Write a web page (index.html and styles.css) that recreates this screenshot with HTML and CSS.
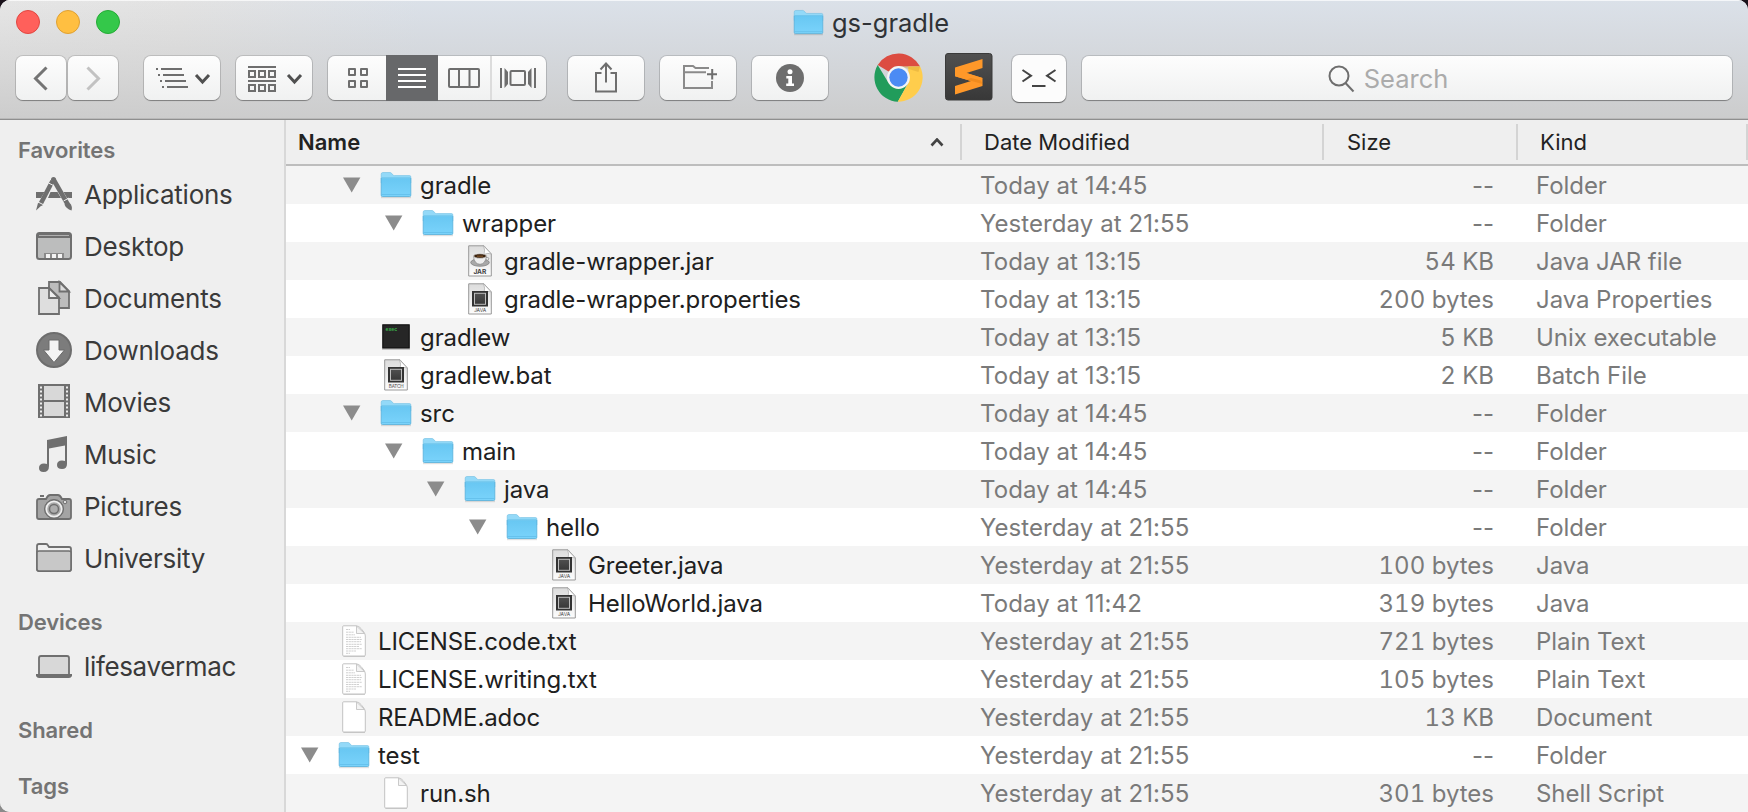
FILE: index.html
```html
<!DOCTYPE html>
<html lang="en">
<head>
<meta charset="utf-8">
<title>gs-gradle</title>
<link rel="stylesheet" href="styles.css">
</head>
<body>
<svg class="defs" aria-hidden="true">
  <defs>
    <linearGradient id="gFolder" x1="0" y1="0" x2="0" y2="1"><stop offset="0" stop-color="#68c7f2"/><stop offset="1" stop-color="#7ad3fb"/></linearGradient>
    <linearGradient id="gPaper" x1="0" y1="0" x2="0" y2="1"><stop offset="0" stop-color="#dcdcdc"/><stop offset="1" stop-color="#fdfdfd"/></linearGradient>
    <linearGradient id="gDark" x1="0" y1="0" x2="0" y2="1"><stop offset="0" stop-color="#505050"/><stop offset="1" stop-color="#383838"/></linearGradient>
  </defs>
  <symbol id="folder" viewBox="0 0 32 28">
    <path d="M1 26.2h30" stroke="#000" stroke-opacity=".12" stroke-width="2"/>
    <path d="M1.2 3.2Q1.2 1.5 2.8 1.5H10q1 0 1.600.8l1.400 1.700q.5.6 1.400.6H29.500q1.300 0 1.300 1.300V12H1.200Z" fill="#93d9f8" stroke="#6fbde2" stroke-width=".6"/>
    <path d="M1.200 7.200H30.800V24.200q0 1.300-1.300 1.300H2.500q-1.300 0-1.300-1.300Z" fill="url(#gFolder)"/>
    <path d="M1.200 7V24.200q0 1.300 1.300 1.300H29.500q1.300 0 1.300-1.300V7" fill="none" stroke="#56b0da" stroke-width=".8"/>
    <path d="M1.500 6.800H30.500M1.600 23.500H30.400" stroke="#5fbbe6" stroke-width=".7" fill="none"/>
  </symbol>
  <symbol id="java" viewBox="0 0 24 32">
    <path d="M.7.8H16L23.300 9V31H.7Z" fill="url(#gPaper)" stroke="#999"/>
    <path d="M15.500.8Q17.500 5 16 9.500Q20 7.500 23.300 9Z" fill="#fff" stroke="#aaa" stroke-width=".7"/>
    <rect x="4" y="8" width="16" height="15.500" fill="#333"/>
    <rect x="6.500" y="10.300" width="11" height="11" fill="url(#gDark)" stroke="#bdbdbd" stroke-width="1"/>
    <text x="12" y="28.700" font-size="5" text-anchor="middle" class="tag">JAVA</text>
  </symbol>
  <symbol id="batch" viewBox="0 0 24 32">
    <path d="M.7.8H16L23.300 9V31H.7Z" fill="url(#gPaper)" stroke="#999"/>
    <path d="M15.500.8Q17.500 5 16 9.500Q20 7.500 23.300 9Z" fill="#fff" stroke="#aaa" stroke-width=".7"/>
    <rect x="4" y="8" width="16" height="15.500" fill="#333"/>
    <rect x="6.500" y="10.300" width="11" height="11" fill="url(#gDark)" stroke="#bdbdbd" stroke-width="1"/>
    <text x="12.200" y="28.700" font-size="4.600" text-anchor="middle" class="tag">BATCH</text>
  </symbol>
  <symbol id="jar" viewBox="0 0 24 32">
    <path d="M.7.8H16L23.300 9V31H.7Z" fill="url(#gPaper)" stroke="#999"/>
    <path d="M15.500.8Q17.500 5 16 9.500Q20 7.500 23.300 9Z" fill="#fff" stroke="#aaa" stroke-width=".7"/>
    <ellipse cx="12" cy="17.500" rx="9.300" ry="3.800" fill="#a9a9a9" stroke="#6e6e6e" stroke-width=".6"/>
    <path d="M5.500 11Q6 19 12 19.300Q17.500 19 18.500 11Z" fill="#eee" stroke="#777" stroke-width=".6"/>
    <path d="M18 12.500Q21.500 12 20.500 14.500Q19.500 16.300 17 16" fill="none" stroke="#999" stroke-width="1"/>
    <ellipse cx="12" cy="11" rx="6.500" ry="2.300" fill="#3c2410" stroke="#ddd" stroke-width=".8"/>
    <path d="M9 11.200h6" stroke="#8b5a2b"/>
    <text x="11.800" y="29" font-size="6.600" text-anchor="middle" class="tag bold">JAR</text>
  </symbol>
  <symbol id="exec" viewBox="0 0 30 28">
    <rect x="1" y="1.500" width="28" height="25.500" fill="#9a9a9a" opacity=".5"/>
    <rect x="1.800" y="1.800" width="26.400" height="23.200" fill="#262626" stroke="#0c0c0c"/>
    <text x="4.500" y="8.200" font-size="5" class="exec-label">exec</text>
  </symbol>
  <symbol id="blank" viewBox="0 0 24 32">
    <path d="M1.500 31.400H23" stroke="#000" stroke-opacity=".18"/>
    <path d="M1.600.8H14Q17 1 19 3.500L21.800 7Q23.300 9 23.300 11V30Q23.300 31 22.300 31H1.700Q.7 31 .7 30V1.700Q.7.8 1.600.8Z" fill="#fff" stroke="#bcbcbc" stroke-width=".9"/>
    <path d="M14.500 1V8.500H22.500Z" fill="#f3f3f3" stroke="#c4c4c4" stroke-width=".9"/>
  </symbol>
  <symbol id="plain" viewBox="0 0 24 32">
    <use href="#blank"/>
    <path d="M4 4.500h4M4 7.200h8M4 9.800h9M4 12.300h15M4 14.500h16M4 16.700h15M4 19.300h16M4 21.500h13M4 23.700h16M4 26h10M4 28.300h4" stroke="#a9a9a9" stroke-width=".9" opacity=".6" stroke-dasharray="2.200 .5"/>
  </symbol>
  <symbol id="tri" viewBox="0 0 18 16"><path d="M0 .5H17.400L8.700 15.500Z" fill="#8c8c8c"/></symbol>
</svg>

<div class="window">
  <header class="chrome">
    <div class="titlebar">
      <div class="lights"><i class="red"></i><i class="yellow"></i><i class="green"></i></div>
      <h1 class="title"><svg class="title-icon"><use href="#folder"/></svg><span>gs-gradle</span></h1>
    </div>
    <div class="toolbar">
      <div class="btn nav"><svg viewBox="0 0 50 44"><path d="M30.500 11.500L19.500 22.500L30.500 33.500" stroke-width="3"/></svg></div>
      <div class="btn nav off"><svg viewBox="0 0 50 44"><path d="M19.500 11.500L30.500 22.500L19.500 33.500" stroke-width="3"/></svg></div>
      <div class="btn std arrange">
        <svg viewBox="0 0 76 44"><path d="M12 13h2M17 13H38M14 19h2M19 19H40M16 25h2M21 25H42M18 31h2M23 31H44"/><path class="dark" d="M52 19L58.500 26L65 19" stroke-width="3"/></svg>
      </div>
      <div class="btn std">
        <svg viewBox="0 0 76 44"><path d="M12 11H40M12 25H40"/><path d="M13 15h6v6h-6zM23 15h6v6h-6zM33 15h6v6h-6zM13 29h6v6h-6zM23 29h6v6h-6zM33 29h6v6h-6z"/><path class="dark" d="M52 19L58.500 26L65 19" stroke-width="3"/></svg>
      </div>
      <div class="btn views">
        <svg class="seg icons-seg" viewBox="0 0 58 44"><path d="M21 13h6v6h-6zM33 13h6v6h-6zM21 25h6v6h-6zM33 25h6v6h-6z" stroke-linejoin="round"/></svg>
        <svg class="seg active" viewBox="0 0 52 44"><path d="M12 13H40M12 19H40M12 25H40M12 31H40"/></svg>
        <svg class="seg columns-seg" viewBox="0 0 52 44"><rect x="11" y="13" width="30" height="18" rx="1"/><path d="M21 13V31M31.500 13V31"/></svg>
        <svg class="seg flow-seg" viewBox="0 0 54 44"><path d="M9 12V32M43 12V32"/><rect x="18.500" y="15" width="14.500" height="14" rx="1"/><path class="solid" d="M12.500 12L16 16V28L12.500 32ZM39.500 12L36 16V28L39.500 32Z"/></svg>
      </div>
      <div class="btn std share"><svg viewBox="0 0 76 44"><path d="M33.500 17H28V35.500H48V17H42.500M38 26.500V8M32.500 13.500L38 7.500L43.500 13.500"/></svg></div>
      <div class="btn std"><svg viewBox="0 0 76 44"><path class="light" d="M49 12H35.500L33 10H24V32H52V25M24.500 16.200H46"/><path d="M47 18.200H57M52.200 13V23.500"/></svg></div>
      <div class="btn std"><svg viewBox="0 0 76 44"><circle class="solid" cx="38" cy="22" r="14"/><circle class="white" cx="38" cy="15.700" r="2.500"/><path class="white" d="M34.300 20H40V27.500H42V30H34.200V27.500H36.300V22.400H34.300Z"/></svg></div>
      <svg class="app-chrome" viewBox="0 0 48 50">
        <path d="M24 25L3.600 12.800A24 24 0 0 1 45.200 14.200H24Z" fill="#dc4c41"/>
        <path d="M3.600 12.800A24 24 0 0 0 23.300 48.800L33.500 30.500L24 25L14 30Z" fill="#219c5b"/>
        <path d="M45.200 14.200A24 24 0 0 1 23.300 48.800L33.600 30.500V14.200Z" fill="#ffcd4c"/>
        <path d="M24 14.200H45.200L43.500 19.500L28 14.800Z" fill="#d9a638" opacity=".45"/>
        <circle cx="24" cy="25" r="11.200" fill="#f4f4f4"/>
        <circle cx="24" cy="25" r="9" fill="#4b8bf4"/>
      </svg>
      <svg class="app-sublime" viewBox="0 0 48 48">
        <rect x=".5" y=".5" width="46.500" height="46.500" rx="2.500" fill="url(#gDark)" stroke="#3a3a3a"/>
        <path d="M10 14.500L37.500 6V15L21.500 20L37.500 25V33L10 41.500V33L26 28L10 23.200Z" fill="#ff9829"/>
        <path d="M10 23.200L21.500 20L37.500 25L35 27Q32 28.500 26 28Z" fill="#ff9829"/>
        <path d="M21.500 26.600L37.500 31L36 27.500L26 25Z" fill="#e27d14" opacity=".5"/>
      </svg>
      <div class="app-term"><svg viewBox="0 0 54 48"><path d="M10.500 16L19 21.700L10.500 27.500M43.500 16L35 21.700L43.500 27.500M20 32H33.500"/></svg></div>
      <div class="btn search"><svg viewBox="0 0 28 30"><circle cx="11" cy="12" r="9.500"/><path d="M17.500 19L25.500 27.500"/></svg><span>Search</span></div>
    </div>
  </header>

  <div class="body">
    <nav class="sidebar">
      <h2>Favorites</h2>
      <a class="item"><svg viewBox="0 0 36 36"><path class="f" d="M0 16H8.500L5 22H0ZM27.500 16H36V22H31ZM14.500 16H21.500L25 22H12Z"/><path d="M16.500 5L4 29" stroke-width="4.600"/><path d="M17.500 3.500L31.500 28" stroke-width="4.600"/><circle class="f" cx="17.500" cy="3.500" r="2.500"/><path class="f" d="M2 27L6 29L0 34.500ZM28.500 28.500Q32 24 35 28.500Q36.500 32 35.500 34.500Q30 32.500 28.500 28.500Z"/><path d="M12.500 7L17.500 9.500M1 25.500L8 29M27.500 25L33 22" stroke="#efefef" stroke-width="1"/></svg><span>Applications</span></a>
      <a class="item"><svg viewBox="0 0 36 36"><rect x="1" y="5" width="34" height="26" rx="2.500" fill="#bcbdbd"/><path d="M2 6H34V8.500H2Z" fill="#f0f0f0"/><path d="M1 9.200H35" stroke-width="1.600"/><path class="f" d="M8 25H28V30H8Z" opacity=".65"/><path d="M10 26h4v4h-4zM16 26h4v4h-4zM22 26h4v4h-4z" fill="#f4f4f4" stroke="none"/></svg><span>Desktop</span></a>
      <a class="item"><svg viewBox="0 0 36 36"><path d="M13 2H24L33 11V28H13Z" fill="#bcbcbc" stroke-width="1.800"/><path d="M23.500 2V11.500H33Z" fill="#ddd" stroke-width="1.800"/><path d="M3 8H13L23 17.500V34H3Z" fill="#dedede" stroke-width="1.800"/><path d="M13 8V18H23Z" fill="#eee" stroke-width="1.800"/></svg><span>Documents</span></a>
      <a class="item"><svg viewBox="0 0 36 36"><circle cx="18" cy="18" r="17" fill="#7c7c7c" stroke="#6d6d6d" stroke-width="2"/><path d="M13 8H23V18H28.500L18 30.500L7.500 18H13Z" fill="#f4f4f4" stroke="#6a6a6a" stroke-width="1"/></svg><span>Downloads</span></a>
      <a class="item"><svg viewBox="0 0 36 36"><rect class="f" x="2" y="0" width="32" height="34"/><path d="M8 2H28V16H8ZM8 18H28V32H8Z" fill="#d8d8d8" stroke="none"/><path d="M5 2.500V33M31 2.500V33" stroke="#eee" stroke-dasharray="2 2"/></svg><span>Movies</span></a>
      <a class="item"><svg viewBox="0 0 36 36"><path class="f" d="M11 4L31 0V28Q31 33 26 33Q21 33 21 29Q21 24.500 26 24.500Q28 24.500 29 25V9.500L13 12.500V30Q13 36 7.500 36Q3 36 3 32Q3 27.500 8 27.500Q10 27.500 11 28Z"/></svg><span>Music</span></a>
      <a class="item"><svg viewBox="0 0 36 36"><path d="M3 11H10Q12 7 14 7H22Q24 7 26 11H33Q35 11 35 13V29Q35 31 33 31H3Q1 31 1 29V13Q1 11 3 11Z" fill="#a4a4a4" stroke-width="1.800"/><path d="M4 8H8"/><circle cx="18" cy="21" r="9.500" fill="#777" stroke="#6d6d6d" stroke-width="1"/><circle cx="18" cy="21" r="7.700" fill="#aaa" stroke="#efefef" stroke-width="1.800"/><circle cx="18" cy="21" r="4.500" fill="#adadad" stroke-width="1.500"/><circle cx="29" cy="14" r="1.800" fill="#ddd" stroke-width="1"/></svg><span>Pictures</span></a>
      <a class="item"><svg viewBox="0 0 36 36"><path d="M1 6Q1 4 3 4H10Q11.500 4 12 5.500L13 7H33Q35 7 35 9V29Q35 31 33 31H3Q1 31 1 29Z" fill="#efefef" stroke-width="1.800"/><path d="M1 12.500Q1 11 3 11H33Q35 11 35 12.500V29Q35 31 33 31H3Q1 31 1 29Z" fill="#c8c8c8" stroke-width="1.600"/></svg><span>University</span></a>
      <h2>Devices</h2>
      <a class="item"><svg viewBox="0 0 36 36"><path d="M3 27V10Q3 8 5 8H31Q33 8 33 10V27Z" fill="#d8d8d8" stroke-width="1.800"/><path class="f" d="M0 26H36V28Q35 30 33 30H3Q1 30 0 28Z"/></svg><span class="device">lifesavermac</span></a>
      <h2>Shared</h2>
      <h2>Tags</h2>
    </nav>

    <main class="list">
      <div class="head">
        <div class="hcell name-h"><span>Name</span><svg viewBox="0 0 14 9"><path d="M1.500 7.500L7 1.500L12.500 7.500"/></svg></div>
        <div class="hcell"><span>Date Modified</span></div>
        <div class="hcell size-h"><span>Size</span></div>
        <div class="hcell"><span>Kind</span></div>
      </div>
      <div class="row"><div class="name l1"><svg class="tri"><use href="#tri"/></svg><svg class="ico folder"><use href="#folder"/></svg><span>gradle</span></div><div class="date">Today at 14:45</div><div class="size none">--</div><div class="kind">Folder</div></div>
      <div class="row"><div class="name l2"><svg class="tri"><use href="#tri"/></svg><svg class="ico folder"><use href="#folder"/></svg><span>wrapper</span></div><div class="date">Yesterday at 21:55</div><div class="size none">--</div><div class="kind">Folder</div></div>
      <div class="row"><div class="name l3"><i class="tri"></i><svg class="ico file"><use href="#jar"/></svg><span>gradle-wrapper.jar</span></div><div class="date">Today at 13:15</div><div class="size">54 KB</div><div class="kind">Java JAR file</div></div>
      <div class="row"><div class="name l3"><i class="tri"></i><svg class="ico file"><use href="#java"/></svg><span>gradle-wrapper.properties</span></div><div class="date">Today at 13:15</div><div class="size">200 bytes</div><div class="kind">Java Properties</div></div>
      <div class="row"><div class="name l1"><i class="tri"></i><svg class="ico exec"><use href="#exec"/></svg><span>gradlew</span></div><div class="date">Today at 13:15</div><div class="size">5 KB</div><div class="kind">Unix executable</div></div>
      <div class="row"><div class="name l1"><i class="tri"></i><svg class="ico file"><use href="#batch"/></svg><span>gradlew.bat</span></div><div class="date">Today at 13:15</div><div class="size">2 KB</div><div class="kind">Batch File</div></div>
      <div class="row"><div class="name l1"><svg class="tri"><use href="#tri"/></svg><svg class="ico folder"><use href="#folder"/></svg><span>src</span></div><div class="date">Today at 14:45</div><div class="size none">--</div><div class="kind">Folder</div></div>
      <div class="row"><div class="name l2"><svg class="tri"><use href="#tri"/></svg><svg class="ico folder"><use href="#folder"/></svg><span>main</span></div><div class="date">Today at 14:45</div><div class="size none">--</div><div class="kind">Folder</div></div>
      <div class="row"><div class="name l3"><svg class="tri"><use href="#tri"/></svg><svg class="ico folder"><use href="#folder"/></svg><span>java</span></div><div class="date">Today at 14:45</div><div class="size none">--</div><div class="kind">Folder</div></div>
      <div class="row"><div class="name l4"><svg class="tri"><use href="#tri"/></svg><svg class="ico folder"><use href="#folder"/></svg><span>hello</span></div><div class="date">Yesterday at 21:55</div><div class="size none">--</div><div class="kind">Folder</div></div>
      <div class="row"><div class="name l5"><i class="tri"></i><svg class="ico file"><use href="#java"/></svg><span>Greeter.java</span></div><div class="date">Yesterday at 21:55</div><div class="size">100 bytes</div><div class="kind">Java</div></div>
      <div class="row"><div class="name l5"><i class="tri"></i><svg class="ico file"><use href="#java"/></svg><span>HelloWorld.java</span></div><div class="date">Today at 11:42</div><div class="size">319 bytes</div><div class="kind">Java</div></div>
      <div class="row"><div class="name l0"><i class="tri"></i><svg class="ico file"><use href="#plain"/></svg><span>LICENSE.code.txt</span></div><div class="date">Yesterday at 21:55</div><div class="size">721 bytes</div><div class="kind">Plain Text</div></div>
      <div class="row"><div class="name l0"><i class="tri"></i><svg class="ico file"><use href="#plain"/></svg><span>LICENSE.writing.txt</span></div><div class="date">Yesterday at 21:55</div><div class="size">105 bytes</div><div class="kind">Plain Text</div></div>
      <div class="row"><div class="name l0"><i class="tri"></i><svg class="ico file"><use href="#blank"/></svg><span>README.adoc</span></div><div class="date">Yesterday at 21:55</div><div class="size">13 KB</div><div class="kind">Document</div></div>
      <div class="row"><div class="name l0"><svg class="tri"><use href="#tri"/></svg><svg class="ico folder"><use href="#folder"/></svg><span>test</span></div><div class="date">Yesterday at 21:55</div><div class="size none">--</div><div class="kind">Folder</div></div>
      <div class="row"><div class="name l1"><i class="tri"></i><svg class="ico file"><use href="#blank"/></svg><span>run.sh</span></div><div class="date">Yesterday at 21:55</div><div class="size">301 bytes</div><div class="kind">Shell Script</div></div>
    </main>
  </div>
</div>
</body>
</html>
```

FILE: styles.css
```css
* { box-sizing: border-box; }
html, body { margin: 0; height: 100%; overflow: hidden; }
body {
  background: linear-gradient(#1a121b 0 50%, #8a8a8a 50%);
  font-family: Inter, "Liberation Sans", sans-serif;
  font-size: 24px;
  color: #242424;
}
.defs { position: absolute; width: 0; height: 0; overflow: visible; }
svg { display: block; flex: none; }

.window {
  width: 1748px;
  height: 812px;
  border-radius: 10px 10px 0 10px;
  overflow: hidden;
  display: flex;
  flex-direction: column;
  background: #efefef;
}

/* Title bar and toolbar */
.chrome {
  height: 120px;
  flex: none;
  background:
    linear-gradient(to bottom, rgba(203,203,203,0), rgba(203,203,203,.55) 60%, rgba(203,203,203,.95)),
    linear-gradient(to right, #e6e6e6 0, #e3e3e3 180px, #dbe1e9 420px, #dbe1e9 100%);
  border-bottom: 1px solid #8f8f8f;
  box-shadow: inset 0 1px 0 rgba(255,255,255,.7), inset 0 -1px 0 #b9b9b9;
}
.titlebar { height: 44px; padding: 0 16px; display: grid; grid-template-columns: 1fr auto 1fr; align-items: center; }
.lights { display: flex; gap: 16px; }
.lights i { width: 24px; height: 24px; border-radius: 50%; border: 1px solid; }
.lights .red { background: #ff605b; border-color: #e14640; }
.lights .yellow { background: #ffbf41; border-color: #dfa032; }
.lights .green { background: #34c84a; border-color: #25ab36; }
.title { margin: 0 6px 0 0; display: flex; align-items: center; gap: 8px; font-size: 25.500px; font-weight: 400; color: #2f3236; }
.title-icon { width: 31px; height: 27px; }
.title span { line-height: 40px; padding-top: 2px; }

.toolbar { height: 44px; margin-top: 12px; padding: 0 16px; display: flex; }
.btn {
  height: 44px;
  border-radius: 7px;
  background: linear-gradient(#fdfdfd, #f0f1f1);
  box-shadow: 0 0 0 1px rgba(0,0,0,.13), 0 1px 1px 0 rgba(0,0,0,.3);
  flex: none;
}
.btn svg { height: 44px; fill: none; stroke: #6e6e6e; stroke-width: 2; }
.btn .dark { stroke: #505050; }
.btn .light { stroke: #8a8a8a; }
.btn .solid { fill: #6e6e6e; stroke: none; }
.btn .white { fill: #fff; stroke: none; }
.nav { width: 50px; margin-right: 2px; }
.nav svg { width: 50px; stroke: #747474; }
.nav.off svg { stroke: #c2c2c2; }
.std { width: 76px; margin-right: 16px; }
.std svg { width: 76px; }
.arrange { margin-left: 24px; }
.views { width: 218px; display: flex; }
.icons-seg { width: 58px; }
.views .active { width: 52px; height: 46px; margin-top: -1px; background: #67686a; stroke: #fff; }
.columns-seg { width: 54px; border-right: 2px solid #dcdcdc; }
.flow-seg { width: 54px; }
.share { margin-left: 22px; }
.app-chrome { width: 49px; height: 51px; margin: -4px 22.500px 0 29.500px; }
.app-sublime { width: 48px; height: 48px; margin: -3px 19px 0 0; }
.app-term {
  width: 54px; height: 47px; flex: none; margin: -1px 16px 0 0;
  border-radius: 7px; background: #fcfcfc;
  box-shadow: 0 0 0 1px rgba(0,0,0,.13), 0 1px 1px rgba(0,0,0,.45);
}
.app-term svg { width: 54px; height: 48px; margin-top: -1px; fill: none; stroke: #444; stroke-width: 2; }
.search { flex: 1; display: flex; justify-content: center; align-items: center; gap: 8px; color: #ababab; font-size: 25.500px; padding-right: 38px; }
.search svg { width: 28px; height: 30px; margin-top: 2px; }
.search span { padding-top: 1px; line-height: 30px; }

.body { flex: 1; display: flex; min-height: 0; }

/* Sidebar */
.sidebar { width: 286px; flex: none; padding-top: 12px; background: #efefef; border-right: 2px solid #d8d8d8; }
.sidebar h2 { margin: 0 0 0 18px; height: 36px; line-height: 36px; font-size: 22px; font-weight: 600; color: #747474; letter-spacing: -.1px; }
.sidebar .item + h2, .sidebar h2 + h2 { margin-top: 20px; }
.item { height: 52px; padding-left: 36px; display: flex; align-items: center; gap: 12px; font-size: 26px; letter-spacing: -.25px; color: #3a3a3a; }
.item svg { width: 36px; height: 36px; fill: none; stroke: #6f6f6f; stroke-width: 2; }
.item .f { fill: #6f6f6f; stroke: none; }
.device { letter-spacing: -.35px; }

/* File list */
.list { flex: 1; min-width: 0; background: #fff; }
.head { height: 46px; padding-top: 4px; background: #efefef; border-bottom: 2px solid #bdbdbd; }
.head, .row { display: grid; grid-template-columns: 676px 362px 194px 230px; }
.hcell { height: 36px; padding-left: 22px; display: flex; align-items: center; border-right: 2px solid #d4d4d4; font-size: 22px; line-height: 36px; color: #222; }
.hcell span { height: 36px; }
.size-h { padding-left: 23px; }
.name-h { padding: 0 16px 0 12px; justify-content: space-between; font-weight: 600; }
.name-h svg { width: 14px; height: 9px; fill: none; stroke: #444; stroke-width: 2.6; }
.row { height: 38px; line-height: 40px; background: #fff; color: #7a7a7a; white-space: nowrap; }
.row:nth-child(even) { background: #f4f4f4; }
.name { height: 38px; display: flex; align-items: center; color: #202020; letter-spacing: -.08px; }
.tri { width: 18px; height: 16px; margin-right: 19px; flex: none; }
.ico { margin-right: 8px; }
.folder { width: 32px; height: 28px; }
.file { width: 24px; height: 32px; margin: 0 12px 0 4px; }
.exec { width: 30px; height: 28px; margin: 0 9px 0 1px; }
.name span { padding-top: 1px; }
.l0 { padding-left: 15px; }
.l1 { padding-left: 57px; }
.l2 { padding-left: 99px; }
.l3 { padding-left: 141px; }
.l4 { padding-left: 183px; }
.l5 { padding-left: 225px; }
.date { padding-left: 18px; letter-spacing: .08px; }
.size { text-align: right; padding-right: 24px; font-variant-numeric: tabular-nums; }
.size.none { font-variant-numeric: normal; }
.kind { padding-left: 18px; letter-spacing: -.06px; }
.tag { font-family: Inter, sans-serif; fill: #444; }
.bold { font-weight: 700; }
.exec-label { font-family: "Liberation Mono", monospace; font-weight: 700; fill: #3bb54a; }
```
